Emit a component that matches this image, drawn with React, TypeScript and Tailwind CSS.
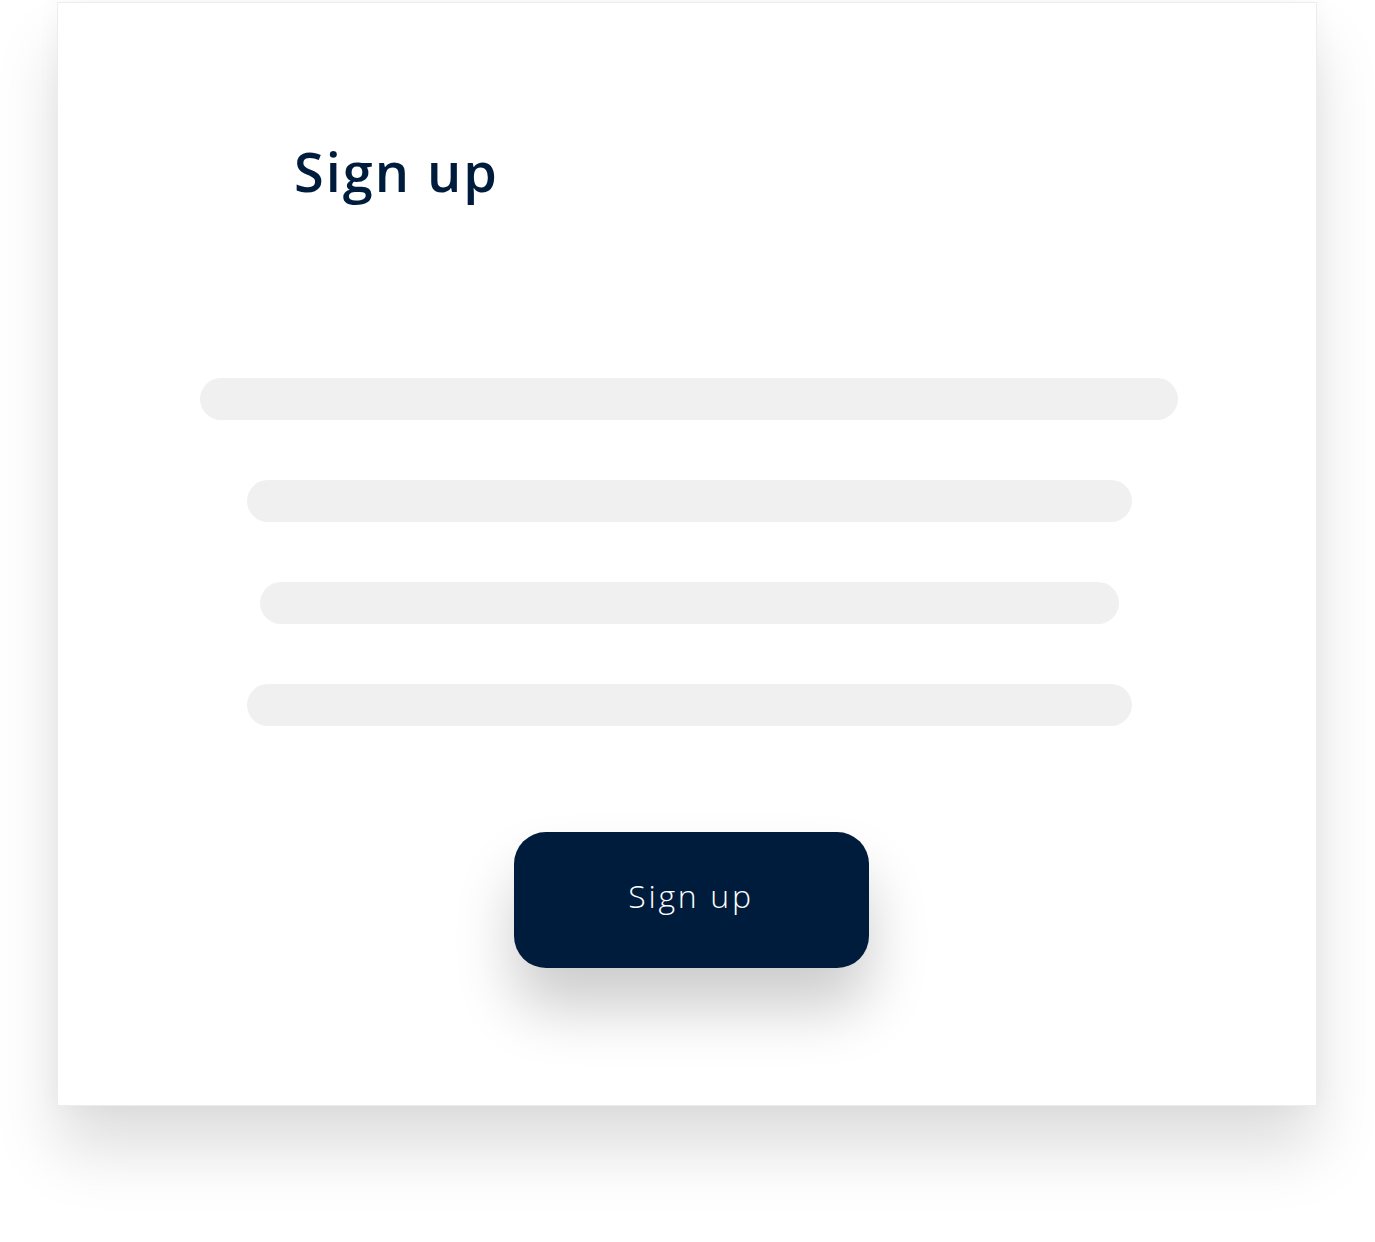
import React from "react";

const fields = [
  { w: "w-[978px]", mt: "mt-0" },
  { w: "w-[885px]", mt: "mt-[60px]" },
  { w: "w-[859px]", mt: "mt-[60px]" },
  { w: "w-[885px]", mt: "mt-[60px]" },
];

export default function App() {
  return (
    <div className="w-[1375px] h-[1242px] bg-white pl-[57px] pt-[2px] overflow-hidden">
      <div className="w-[1260px] h-[1104px] bg-white border border-[#ececec] shadow-[0_45px_60px_rgba(0,0,0,0.13),0_0_24px_rgba(0,0,0,0.035)] flex flex-col">
        <h1
          className="ml-[236px] mt-[141px] text-[54px] leading-none font-semibold text-[#001c3c] tracking-[2px]"
          style={{ fontFamily: '"Open Sans", "Liberation Sans", sans-serif' }}
        >
          Sign up
        </h1>
        <div className="mt-[180px] flex flex-col items-center pl-[4px]">
          {fields.map((f, i) => (
            <div key={i} className={`${f.w} ${f.mt} h-[42px] rounded-full bg-[#f0f0f0]`} />
          ))}
          <button
            className="mt-[106px] ml-[4px] w-[355px] h-[136px] pb-[8px] rounded-[32px] bg-[#001c3c] text-white text-[32px] font-light tracking-[2.7px] shadow-[0_40px_60px_rgba(0,0,0,0.2)]"
            style={{ fontFamily: '"Open Sans", "Liberation Sans", sans-serif' }}
          >
            Sign up
          </button>
        </div>
      </div>
    </div>
  );
}
